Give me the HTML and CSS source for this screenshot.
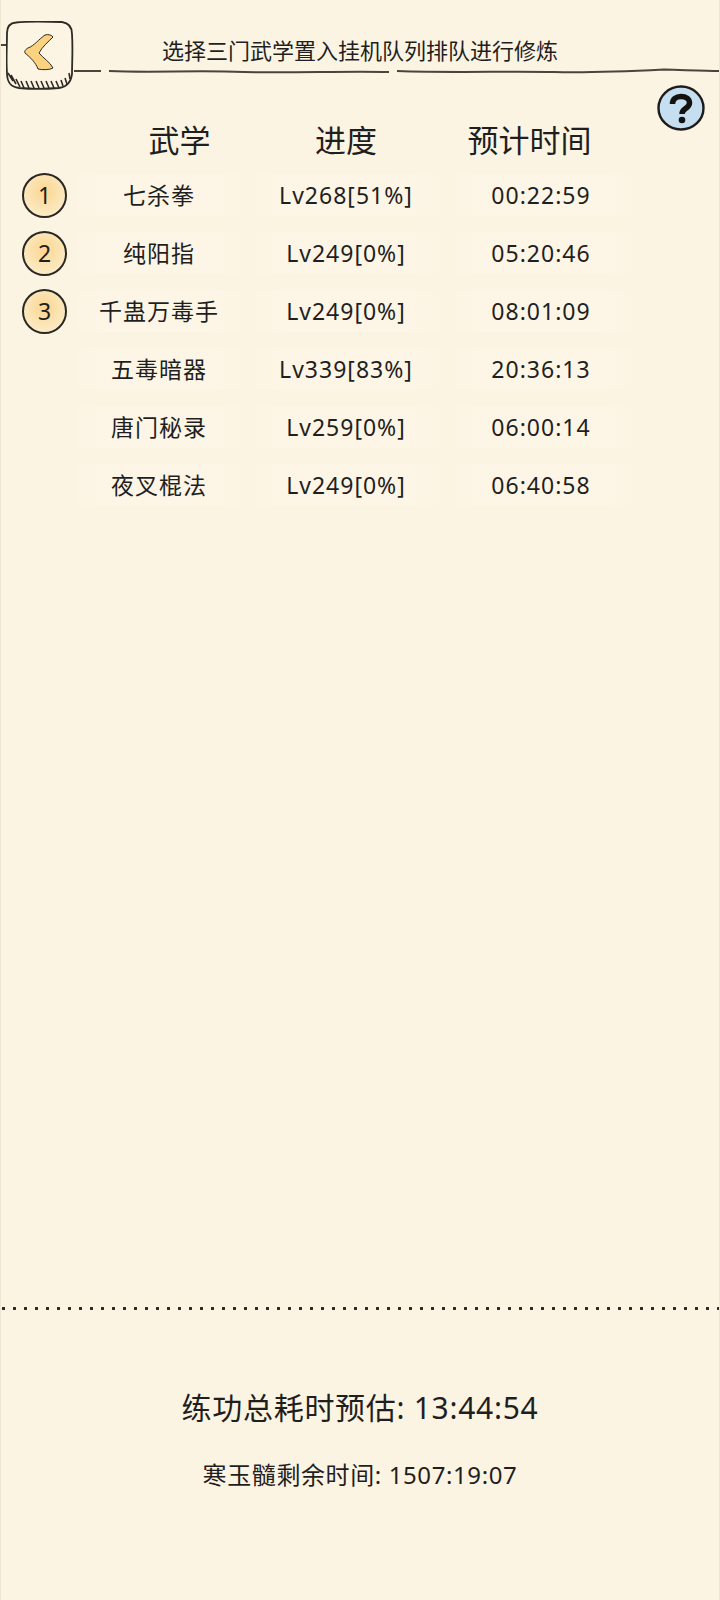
FILE: index.html
```html
<!DOCTYPE html>
<html lang="zh">
<head>
    <meta charset="UTF-8">
    <title>挂机队列</title>
    <link rel="stylesheet" href="styles.css">
</head>
<body>
    <div class="page">
        <header class="top">
            <div class="top-stub"></div>
            <button class="back">
                <svg width="68" height="69" viewBox="0 0 68 69">
                    <path d="M10 1.500 C24 0 44 1 56 1 C63 2 66 6 66 13 C67 28 66 42 66 53 C65 62 61 66 53 67 C40 68 24 68 13 67 C5 66 1 62 1 52 C0 40 1 24 1 12 C1 5 4 2 10 1.500 Z" fill="#fcf5e4" stroke="#2e2a24" stroke-width="1.800"/>
                    <path d="M2 52 L7 60 M5 54 L10 63 M10 58 L14 66 M15 60 L18 67 M20 60 L23 67 M25 60 L28 67 M30 60 L33 67 M35 60 L38 67 M40 60 L43 67 M45 60 L48 67 M50 60 L53 67 M55 59 L57 65 M59 57 L61 63 M63 52 L64 58" stroke="#2e2a24" stroke-width="1.600" fill="none"/>
                    <path d="M39 14 C42 13 46 14 47 16 C42 21 36 26 33 32 C37 37 44 41 47 47 C44 49 36 49 32 48 C30 42 24 36 19 32 C18 30 20 28 22 27 C28 25 33 18 39 14 Z" fill="#fbd27f" stroke="#2e2a24" stroke-width="1"/>
                </svg>
            </button>
            <div class="top-main">
                <h1 class="title">选择三门武学置入挂机队列排队进行修炼</h1>
                <svg class="top-line" width="645" height="6" viewBox="0 0 645 6">
                    <path d="M0 3 L27 3 M35 3 C80 5 120 2 170 4 C220 5 270 3 315 4 M323 3 C380 5 430 3 480 4 C520 5 560 3 590 1.500 C610 2 630 3 645 3" fill="none" stroke="#4a453c" stroke-width="2"/>
                </svg>
            </div>
        </header>

        <div class="help-row">
            <div class="help">
                <svg width="48" height="46" viewBox="0 0 48 46">
                    <ellipse cx="24" cy="23" rx="22.500" ry="21.500" fill="#c5dff0" stroke="#1e1c1a" stroke-width="2.400"/>
                    <path d="M15.500 19 C15.500 14 19 11.500 24 11.500 C29 11.500 32.500 14 32.500 18 C32.500 21 30 22.500 28 24 C26 25.500 25 26.500 25 29" fill="none" stroke="#14130f" stroke-width="5.500"/>
                    <circle cx="25" cy="35" r="3.300" fill="#14130f"/>
                </svg>
            </div>
        </div>

        <section class="skills">
            <div class="skill-head">
                <span></span>
                <span>武学</span>
                <span>进度</span>
                <span class="head-time">预计时间</span>
            </div>
            <div class="skill-row">
                <span class="badge">1</span>
                <span class="cell">七杀拳</span>
                <span class="cell">Lv268[51%]</span>
                <span class="cell">00:22:59</span>
            </div>
            <div class="skill-row">
                <span class="badge">2</span>
                <span class="cell">纯阳指</span>
                <span class="cell">Lv249[0%]</span>
                <span class="cell">05:20:46</span>
            </div>
            <div class="skill-row">
                <span class="badge">3</span>
                <span class="cell">千蛊万毒手</span>
                <span class="cell">Lv249[0%]</span>
                <span class="cell">08:01:09</span>
            </div>
            <div class="skill-row">
                <span></span>
                <span class="cell">五毒暗器</span>
                <span class="cell">Lv339[83%]</span>
                <span class="cell">20:36:13</span>
            </div>
            <div class="skill-row">
                <span></span>
                <span class="cell">唐门秘录</span>
                <span class="cell">Lv259[0%]</span>
                <span class="cell">06:00:14</span>
            </div>
            <div class="skill-row">
                <span></span>
                <span class="cell">夜叉棍法</span>
                <span class="cell">Lv249[0%]</span>
                <span class="cell">06:40:58</span>
            </div>
        </section>

        <footer class="summary">
            <div class="dots"></div>
            <p class="total">练功总耗时预估: 13:44:54</p>
            <p class="remain">寒玉髓剩余时间: 1507:19:07</p>
        </footer>
    </div>
</body>
</html>
```

FILE: styles.css
```css
html, body {
    margin: 0;
    padding: 0;
}

body {
    background-color: #fcf4e3;
    color: #1f1f1f;
    font-family: "Noto Sans", "Noto Sans CJK SC", sans-serif;
}

.page {
    display: flex;
    flex-direction: column;
    height: 1600px;
    overflow: hidden;
    box-sizing: border-box;
    border-left: 1px solid #f0e7d3;
    border-right: 1px solid #f0e7d3;
}

/* top bar */
.top {
    display: flex;
    align-items: flex-start;
    padding-top: 21px;
}

.top-stub {
    width: 5px;
    height: 2px;
    margin: 23px 0 0;
    background-color: #4a453c;
}

.back {
    display: block;
    width: 68px;
    height: 69px;
    padding: 0;
    border: none;
    background: none;
}

.top-main {
    flex: 1;
    display: flex;
    flex-direction: column;
    padding-top: 14px;
}

.title {
    margin: 0;
    padding-left: 88px;
    font-size: 22px;
    font-weight: 400;
    line-height: 30px;
    white-space: nowrap;
}

.top-line {
    display: block;
    margin-top: 3px;
}

.help-row {
    display: flex;
    justify-content: flex-end;
    padding-right: 14px;
    margin-top: -5px;
    margin-bottom: -15px;
}

.help {
    width: 48px;
    height: 46px;
}

/* skill list */
.skills {
    display: flex;
    flex-direction: column;
}

.skill-head,
.skill-row {
    display: grid;
    grid-template-columns: 70px 176px 198px 192px;
    align-items: center;
    text-align: center;
}

.skill-head {
    height: 44px;
    font-size: 31px;
    margin-bottom: 6px;
}

.skill-head span:nth-child(2) {
    padding-left: 41px;
}

.head-time {
    margin-left: -23px;
    white-space: nowrap;
}

.skill-row {
    height: 58px;
    font-size: 23px;
    letter-spacing: 1px;
}

.cell {
    line-height: 42px;
    background: linear-gradient(90deg, rgba(255, 250, 238, 0), rgba(255, 250, 238, 0.25) 20%, rgba(255, 250, 238, 0.25) 80%, rgba(255, 250, 238, 0));
}

.badge {
    justify-self: end;
    width: 41px;
    height: 41px;
    margin-right: 4px;
    border: 2px solid #2b2723;
    border-radius: 50%;
    font-size: 23px;
    letter-spacing: 0;
    line-height: 41px;
    background: radial-gradient(circle at 50% 40%, #fbd690, #fce9c2 70%, #fdf5e3);
}

/* bottom summary */
.summary {
    margin-top: auto;
    height: 293px;
    text-align: center;
}

.dots {
    height: 3px;
    background-image: radial-gradient(circle, #2a2622 1.4px, transparent 1.6px);
    background-size: 11px 3px;
    background-position: -3px 0;
    background-repeat: repeat-x;
}

.total {
    margin: 76px 0 0;
    font-size: 30px;
    line-height: 44px;
    letter-spacing: 0.7px;
}

.remain {
    margin: 23px 0 0;
    font-size: 24px;
    line-height: 44px;
    letter-spacing: 0.6px;
}
```
